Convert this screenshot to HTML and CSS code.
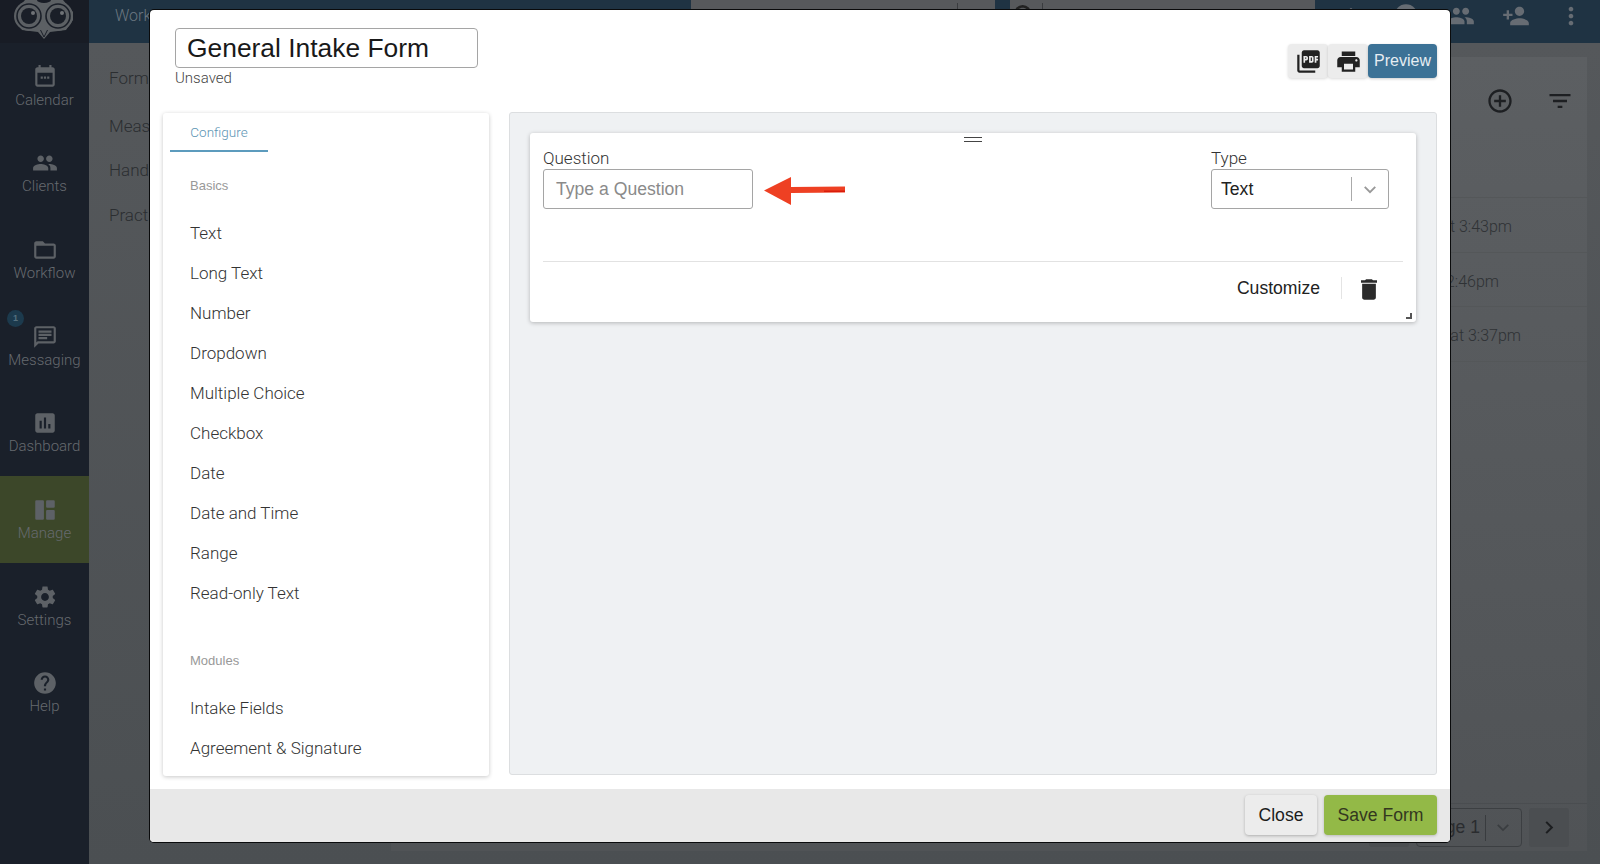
FILE: index.html
```html
<!DOCTYPE html>
<html lang="en">
<head>
<meta charset="utf-8">
<title>General Intake Form</title>
<link rel="stylesheet" href="styles.css">
</head>
<body>
<div class="app">
  <aside class="sidebar">
    <div class="logo">
      <svg width="89" height="43" viewBox="0 0 89 43">
        <path d="M25 0H63L73 12V20L66 30L50 32L44 39L38 32L22 30L15 20V12Z" fill="#5c6064"/>
        <circle cx="29" cy="16" r="15" fill="#5c6064"/>
        <circle cx="58" cy="16" r="15" fill="#5c6064"/>
        <circle cx="29" cy="16" r="12" fill="none" stroke="#1a1f28" stroke-width="1.600"/>
        <circle cx="58" cy="16" r="12" fill="none" stroke="#1a1f28" stroke-width="1.600"/>
        <circle cx="29" cy="16" r="8" fill="#1a1f28"/>
        <circle cx="58" cy="16" r="8" fill="#1a1f28"/>
        <circle cx="33" cy="13" r="2" fill="#6f7377"/>
        <circle cx="62" cy="13" r="2" fill="#6f7377"/>
        <ellipse cx="44" cy="0" rx="7" ry="3" fill="#181c25"/>
        <path d="M40.500 30L44 37L47.500 30" fill="none" stroke="#1a1f28" stroke-width="1"/>
      </svg>
    </div>
    <nav class="nav">
      <a class="nav-item">
        <svg class="nav-icon" viewBox="0 0 24 24"><path d="M19 3h-1V1h-2v2H8V1H6v2H5c-1.100 0-2 .9-2 2v14c0 1.100.9 2 2 2h14c1.100 0 2-.9 2-2V5c0-1.100-.9-2-2-2zm0 16H5V8h14v11zM8 11.500h2v2H8zm3 0h2v2h-2zm3 0h2v2h-2z"/></svg>
        <span>Calendar</span>
      </a>
      <a class="nav-item">
        <svg class="nav-icon" viewBox="0 0 24 24"><path d="M16 11c1.660 0 2.990-1.340 2.990-3S17.660 5 16 5c-1.660 0-3 1.340-3 3s1.340 3 3 3zm-8 0c1.660 0 2.990-1.340 2.990-3S9.660 5 8 5C6.340 5 5 6.340 5 8s1.340 3 3 3zm0 2c-2.330 0-7 1.170-7 3.500V19h14v-2.500c0-2.330-4.670-3.500-7-3.500zm8 0c-.29 0-.62.02-.97.05 1.160.84 1.970 1.970 1.970 3.450V19h6v-2.500c0-2.330-4.670-3.500-7-3.500z"/></svg>
        <span>Clients</span>
      </a>
      <a class="nav-item">
        <svg class="nav-icon" viewBox="0 0 24 24"><path d="M20 6h-8l-2-2H4c-1.100 0-1.990.9-1.990 2L2 18c0 1.100.9 2 2 2h16c1.100 0 2-.9 2-2V8c0-1.100-.9-2-2-2zm0 12H4V8h16v10z"/></svg>
        <span>Workflow</span>
      </a>
      <a class="nav-item">
        <span class="badge">1</span>
        <svg class="nav-icon" viewBox="0 0 24 24"><path d="M20 2H4c-1.100 0-1.990.9-1.990 2L2 22l4-4h14c1.100 0 2-.9 2-2V4c0-1.100-.9-2-2-2zm0 14H5.170L4 17.170V4h16v12zM6 12h8v2H6zm0-3h12v2H6zm0-3h12v2H6z"/></svg>
        <span>Messaging</span>
      </a>
      <a class="nav-item">
        <svg class="nav-icon" viewBox="0 0 24 24"><path d="M19 3H5c-1.100 0-2 .9-2 2v14c0 1.100.9 2 2 2h14c1.100 0 2-.9 2-2V5c0-1.100-.9-2-2-2zM9 17H7v-7h2v7zm4 0h-2V7h2v10zm4 0h-2v-4h2v4z"/></svg>
        <span>Dashboard</span>
      </a>
      <a class="nav-item nav-active">
        <svg class="nav-icon" viewBox="0 0 24 24"><path d="M4 3h6a1 1 0 0 1 1 1v16a1 1 0 0 1-1 1H4a1 1 0 0 1-1-1V4a1 1 0 0 1 1-1zm10 0h6a1 1 0 0 1 1 1v5a1 1 0 0 1-1 1h-6a1 1 0 0 1-1-1V4a1 1 0 0 1 1-1zm0 9h6a1 1 0 0 1 1 1v7a1 1 0 0 1-1 1h-6a1 1 0 0 1-1-1v-7a1 1 0 0 1 1-1z"/></svg>
        <span>Manage</span>
      </a>
      <a class="nav-item">
        <svg class="nav-icon" viewBox="0 0 24 24"><path d="M19.140 12.940c.04-.3.06-.61.06-.94 0-.32-.02-.64-.07-.94l2.030-1.580c.18-.14.23-.41.12-.61l-1.920-3.320c-.12-.22-.37-.29-.59-.22l-2.390.96c-.5-.38-1.030-.7-1.620-.94l-.36-2.540c-.04-.24-.24-.41-.48-.41h-3.840c-.24 0-.43.17-.47.41l-.36 2.540c-.59.24-1.130.57-1.620.94l-2.390-.96c-.22-.08-.47 0-.59.22L2.740 8.870c-.12.21-.08.47.12.61l2.030 1.580c-.05.3-.09.63-.09.94s.02.64.07.94l-2.030 1.580c-.18.14-.23.41-.12.61l1.920 3.320c.12.22.37.29.59.22l2.390-.96c.5.38 1.030.7 1.620.94l.36 2.540c.05.24.24.41.48.41h3.840c.24 0 .44-.17.47-.41l.36-2.540c.59-.24 1.130-.56 1.620-.94l2.390.96c.22.08.47 0 .59-.22l1.920-3.320c.12-.22.07-.47-.12-.61l-2.010-1.580zM12 15.600c-1.980 0-3.600-1.620-3.600-3.600s1.620-3.600 3.600-3.600 3.600 1.620 3.600 3.600-1.620 3.600-3.600 3.600z"/></svg>
        <span>Settings</span>
      </a>
      <a class="nav-item">
        <svg class="nav-icon" viewBox="0 0 24 24"><path d="M12 2C6.480 2 2 6.480 2 12s4.480 10 10 10 10-4.480 10-10S17.520 2 12 2zm1 17h-2v-2h2v2zm2.070-7.750l-.9.92C13.450 12.900 13 13.500 13 15h-2v-.5c0-1.100.45-2.100 1.170-2.830l1.240-1.260c.37-.36.59-.86.59-1.410 0-1.100-.9-2-2-2s-2 .9-2 2H8c0-2.210 1.790-4 4-4s4 1.790 4 4c0 .88-.36 1.680-.93 2.250z"/></svg>
        <span>Help</span>
      </a>
    </nav>
  </aside>
  <div class="main">
    <header class="topbar">
      <span class="top-title">Workspace</span>
      <div class="top-tab"><span class="top-tab-text">Work Wellness Team</span><span class="top-tab-sep"></span></div>
      <div class="top-search">
        <svg class="search-icon" viewBox="0 0 24 24"><path d="M15.500 14h-.79l-.28-.27A6.470 6.470 0 0 0 16 9.500 6.500 6.500 0 1 0 9.500 16c1.610 0 3.090-.59 4.230-1.570l.27.28v.79l5 4.990L20.490 19l-4.990-5zm-6 0C7.010 14 5 11.990 5 9.500S7.010 5 9.500 5 14 7.010 14 9.500 11.990 14 9.500 14z"/></svg>
        <span class="search-text">Search</span>
      </div>
      <div class="top-icons">
        <svg class="top-icon" viewBox="0 0 24 24"><path d="M12 5l-9 8h3v7h12v-7h3z"/></svg>
        <svg class="top-icon" viewBox="0 0 24 24"><circle cx="12" cy="12" r="10"/></svg>
        <svg class="top-icon" viewBox="0 0 24 24"><path d="M16 11c1.660 0 2.990-1.340 2.990-3S17.660 5 16 5c-1.660 0-3 1.340-3 3s1.340 3 3 3zm-8 0c1.660 0 2.990-1.340 2.990-3S9.660 5 8 5C6.340 5 5 6.340 5 8s1.340 3 3 3zm0 2c-2.330 0-7 1.170-7 3.500V19h14v-2.500c0-2.330-4.670-3.500-7-3.500zm8 0c-.29 0-.62.02-.97.05 1.160.84 1.970 1.970 1.970 3.450V19h6v-2.500c0-2.330-4.670-3.500-7-3.500z"/></svg>
        <svg class="top-icon" viewBox="0 0 24 24"><path d="M15 12c2.210 0 4-1.790 4-4s-1.790-4-4-4-4 1.790-4 4 1.790 4 4 4zm-9-2V7H4v3H1v2h3v3h2v-3h3v-2H6zm9 4c-2.670 0-8 1.340-8 4v2h16v-2c0-2.660-5.330-4-8-4z"/></svg>
        <svg class="top-icon" viewBox="0 0 24 24"><path d="M12 8c1.100 0 2-.9 2-2s-.9-2-2-2-2 .9-2 2 .9 2 2 2zm0 2c-1.100 0-2 .9-2 2s.9 2 2 2 2-.9 2-2-.9-2-2-2zm0 6c-1.100 0-2 .9-2 2s.9 2 2 2 2-.9 2-2-.9-2-2-2z"/></svg>
      </div>
    </header>
    <div class="content">
      <nav class="subnav">
        <a>Forms</a>
        <a>Measures</a>
        <a>Handouts</a>
        <a>Practice</a>
      </nav>
      <section class="list-card">
        <div class="list-tools">
          <svg class="tool-icon" viewBox="0 0 24 24"><path d="M13 7h-2v4H7v2h4v4h2v-4h4v-2h-4V7zm-1-5C6.480 2 2 6.480 2 12s4.480 10 10 10 10-4.480 10-10S17.520 2 12 2zm0 18c-4.410 0-8-3.590-8-8s3.590-8 8-8 8 3.590 8 8-3.590 8-8 8z"/></svg>
          <svg class="tool-icon" viewBox="0 0 24 24"><path d="M10 18h4v-2h-4v2zM3 6v2h18V6H3zm3 7h12v-2H6v2z"/></svg>
        </div>
        <div class="list-row row-a">Saved on June 4 at 3:43pm</div>
        <div class="list-row row-b">Saved on June 4, 2:46pm</div>
        <div class="list-row row-c">Saved on June 4 at 3:37pm</div>
        <div class="pager">
          <div class="pager-btn"></div>
          <div class="pager-select">
            <span>Page 1</span>
            <span class="pager-sep"></span>
            <svg class="pager-chev" viewBox="0 0 16 10"><path d="M2 2l6 6 6-6" fill="none" stroke="#3a3d40" stroke-width="2"/></svg>
          </div>
          <div class="pager-btn">
            <svg class="pager-next" viewBox="0 0 10 16"><path d="M2 2l6 6-6 6" fill="none" stroke="#1c1e20" stroke-width="2.200"/></svg>
          </div>
        </div>
      </section>
    </div>
  </div>
</div>

<div class="modal">
  <header class="modal-head">
    <div class="title-block">
      <div class="title-input">General Intake Form</div>
      <div class="status">Unsaved</div>
    </div>
    <div class="head-actions">
      <button class="icon-btn">
        <svg class="btn-icon" viewBox="0 0 24 24"><path d="M20 2H8c-1.100 0-2 .9-2 2v12c0 1.100.9 2 2 2h12c1.100 0 2-.9 2-2V4c0-1.100-.9-2-2-2zm-8.500 7.500c0 .83-.67 1.500-1.500 1.500H9v2H7.500V7H10c.83 0 1.500.67 1.500 1.500v1zm5 2c0 .83-.67 1.500-1.500 1.500h-2.500V7H15c.83 0 1.500.67 1.500 1.500v3zm4-3H19v1h1.500V11H19v2h-1.500V7h3v1.500zM9 9.500h1v-1H9v1zM4 6H2v14c0 1.100.9 2 2 2h14v-2H4V6zm10 5.500h1v-3h-1v3z"/></svg>
      </button>
      <button class="icon-btn">
        <svg class="btn-icon" viewBox="0 0 24 24"><path d="M19 8H5c-1.660 0-3 1.340-3 3v6h4v4h12v-4h4v-6c0-1.660-1.340-3-3-3zm-3 11H8v-5h8v5zm3-7c-.55 0-1-.45-1-1s.45-1 1-1 1 .45 1 1-.45 1-1 1zm-1-9H6v4h12V3z"/></svg>
      </button>
      <button class="preview-btn">Preview</button>
    </div>
  </header>
  <div class="modal-body">
    <aside class="palette">
      <div class="tabs"><span class="tab">Configure</span></div>
      <div class="group-title">Basics</div>
      <ul class="fields">
        <li>Text</li>
        <li>Long Text</li>
        <li>Number</li>
        <li>Dropdown</li>
        <li>Multiple Choice</li>
        <li>Checkbox</li>
        <li>Date</li>
        <li>Date and Time</li>
        <li>Range</li>
        <li>Read-only Text</li>
      </ul>
      <div class="group-title group-modules">Modules</div>
      <ul class="fields">
        <li>Intake Fields</li>
        <li>Agreement &amp; Signature</li>
      </ul>
    </aside>
    <main class="canvas">
      <article class="q-card">
        <div class="drag-handle"></div>
        <div class="q-row">
          <div class="q-left">
            <div class="q-field">
              <label class="q-label">Question</label>
              <div class="q-input">Type a Question</div>
            </div>
            <svg class="arrow" width="82" height="30" viewBox="0 0 82 30">
              <path d="M0 14.500L27 1v10L81 10.500v6L27 17v12z" fill="#ee4023"/>
              <path d="M60 14.500h21v1.500H60z" fill="#d91c0b"/>
            </svg>
          </div>
          <div class="q-field q-type">
            <label class="q-label">Type</label>
            <div class="q-select">
              <span class="q-select-value">Text</span>
              <span class="q-select-sep"></span>
              <svg class="q-select-chev" viewBox="0 0 16 10"><path d="M2 2l6 6 6-6" fill="none" stroke="#999" stroke-width="2.200"/></svg>
            </div>
          </div>
        </div>
        <div class="q-foot">
          <span class="customize">Customize</span>
          <span class="foot-sep"></span>
          <svg class="trash" viewBox="0 0 14 18"><path d="M1 16c0 1.100.9 2 2 2h8c1.100 0 2-.9 2-2V4H1v12zM14 1h-3.500l-1-1h-5l-1 1H0v2h14V1z"/></svg>
        </div>
        <div class="resize-corner"></div>
      </article>
    </main>
  </div>
  <footer class="modal-foot">
    <button class="close-btn">Close</button>
    <button class="save-btn">Save Form</button>
  </footer>
</div>
</body>
</html>
```
FILE: styles.css
```css
* { box-sizing: border-box; }
html, body { margin: 0; height: 100%; overflow: hidden; }
body { font-family: "Liberation Sans", Arial, sans-serif; background: #4f5356; }

.app { display: flex; width: 1600px; height: 864px; }

/* dimmed application behind the dialog */
.sidebar { width: 89px; flex: none; background: #1a202a; display: flex; flex-direction: column; }
.logo { height: 43px; background: #181c25; overflow: hidden; }
.logo svg { display: block; }
.nav { display: flex; flex-direction: column; }
.nav-item { position: relative; height: 86.700px; display: flex; flex-direction: column; align-items: center; padding-top: 20.500px; gap: 1px; font: 300 15px Roboto, sans-serif; color: #666a6f; }
.nav-active { background: #3c4729; }
.nav-icon { width: 26px; height: 26px; fill: #5d6166; flex: none; }
.badge { position: absolute; left: 7px; top: 7px; width: 17px; height: 17px; border-radius: 50%; background: #1c3a4d; color: #55707f; font: 700 9px/17px "Liberation Sans", sans-serif; text-align: center; }

.main { flex: 1; display: flex; flex-direction: column; min-width: 0; }
.topbar { height: 43px; flex: none; background: #1f3343; display: flex; position: relative; }
.top-title { font: 300 16px/32px Roboto, sans-serif; color: #6a7680; padding-left: 26px; width: 602px; }
.top-tab { width: 304px; height: 43px; background: #57595c; display: flex; font-size: 15px; font-weight: 700; color: #222; padding: 6px 0 0 10px; }
.top-tab-text { flex: 1; }
.top-tab-sep { width: 1px; height: 30px; margin: -3px 37px 0 0; background: #3a3c3f; }
.top-search { margin-left: 15px; width: 305px; height: 43px; background: #57595c; display: flex; align-items: flex-start; font-size: 15px; color: #222; }
.search-icon { width: 32px; height: 32px; fill: #222; margin-top: 1px; flex: none; }
.search-text { border-left: 1px solid #3a3c3f; height: 30px; padding: 6px 0 0 8px; margin-top: 3px; }
.top-icons { flex: 1; display: flex; align-items: flex-start; padding-left: 22px; gap: 27px; }
.top-icon { width: 28px; height: 28px; fill: #666c73; flex: none; margin-top: 2px; }

.content { flex: 1; display: flex; min-height: 0; background: linear-gradient(#55585b, #4b4f52); padding-right: 13px; }
.subnav { width: 302px; flex: none; display: flex; flex-direction: column; padding: 24px 0 0 20px; font: 300 17px Roboto, sans-serif; color: #2b2e31; }
.subnav a { height: 44.500px; line-height: 22px; white-space: nowrap; }
.subnav a:first-child { height: 47.500px; }
.list-card { flex: 1; margin-top: 14px; margin-bottom: 13px; background: linear-gradient(#5c5f62, #505356); display: flex; flex-direction: column; min-width: 0; }
.list-tools { height: 141px; flex: none; display: flex; justify-content: flex-end; align-items: flex-start; gap: 32px; padding: 30px 13px 0 0; border-bottom: 1px solid #545759; }
.tool-icon { width: 28px; height: 28px; fill: #1d1f22; }
.list-row { height: 54.500px; flex: none; display: flex; justify-content: flex-end; align-items: center; padding-top: 4px; border-bottom: 1px solid #545759; font: 300 16px Roboto, sans-serif; color: #2f3235; white-space: nowrap; overflow: hidden; }
.row-a { padding-right: 75px; }
.row-b { padding-right: 88px; }
.row-c { padding-right: 66px; }
.pager { margin-top: auto; height: 48px; flex: none; display: flex; justify-content: flex-end; gap: 7px; padding: 4px 18px 0 0; border-top: 1px solid #4a4d50; }
.pager-btn { width: 40px; height: 39px; background: #4b4e51; border-radius: 3px; display: flex; align-items: center; justify-content: center; }
.pager-select { width: 106px; height: 39px; border: 1px solid #3c3f42; border-radius: 4px; display: flex; align-items: center; justify-content: flex-end; padding-right: 11px; font-size: 17.600px; color: #2a2c2f; }
.pager-sep { width: 1px; height: 26px; margin: 0 10px 0 5px; background: #393c3f; }
.pager-chev { width: 14px; height: 9px; }
.pager-next { width: 10px; height: 15px; }

/* dialog */
.modal { position: absolute; left: 150px; top: 10px; width: 1300px; height: 832px; background: #fff; border-radius: 4px; box-shadow: 0 0 0 1px #0a0b0c; display: flex; flex-direction: column; overflow: hidden; }
.modal-head { height: 102px; flex: none; display: flex; justify-content: space-between; padding: 18px 13px 0 25px; }
.title-input { width: 303px; height: 40px; border: 1px solid #a5a5a5; border-radius: 4px; padding: 0 11px; font-size: 26.400px; line-height: 38px; color: #191919; white-space: nowrap; }
.status { font: 300 15px/20px Roboto, sans-serif; color: #444; }
.head-actions { display: flex; align-items: flex-start; margin-top: 16px; }
.icon-btn { width: 40px; height: 34px; padding: 0; border: 0; background: #ececec; border-radius: 4px; box-shadow: 0 1px 3px rgba(0,0,0,.15); display: flex; align-items: center; justify-content: center; }
.btn-icon { width: 27px; height: 27px; fill: #222; }
.preview-btn { width: 69px; height: 34px; padding: 0; border: 0; background: #3c7296; border-radius: 4px; color: #e6edf2; font: 16px "Liberation Sans", sans-serif; box-shadow: 0 1px 3px rgba(0,0,0,.2); }

.modal-body { flex: 1; display: flex; gap: 20px; padding: 0 13px; min-height: 0; }
.palette { width: 326px; height: 663px; margin-top: 1px; flex: none; background: #fff; border-radius: 3px; box-shadow: 0 1px 4px rgba(0,0,0,.22); padding: 0 7px; }
.tabs { height: 39px; }
.tab { display: inline-block; width: 98px; height: 39px; border-bottom: 2px solid #5c9bbd; text-align: center; font: 300 13.500px/39px Roboto, sans-serif; color: #5c94b4; }
.group-title { font: 13px/16px "Liberation Sans", sans-serif; color: #999; padding: 26px 0 0 20px; }
.group-modules { padding-top: 40px; }
.fields { list-style: none; margin: 0; padding: 19px 0 0 20px; }
.fields li { height: 40px; font: 300 17px/40px Roboto, sans-serif; color: #333; white-space: nowrap; }

.canvas { width: 928px; height: 663px; flex: none; background: #eff1f3; border: 1px solid #dcdee0; border-radius: 3px; padding: 20px; }
.q-card { position: relative; height: 189px; background: #fff; border-radius: 3px; box-shadow: 0 1px 4px rgba(0,0,0,.25); padding: 15px 13px 0; }
.drag-handle { position: absolute; left: 434px; top: 4px; width: 18px; height: 5px; border-top: 1.500px solid #444; border-bottom: 1.500px solid #444; }
.q-row { display: flex; justify-content: space-between; padding-right: 14px; height: 114px; border-bottom: 1px solid #e2e2e2; }
.q-left { display: flex; align-items: flex-start; gap: 11px; }
.q-label { display: block; font: 300 17px/21px Roboto, sans-serif; color: #333; }
.q-input { width: 210px; height: 40px; border: 1px solid #a5a5a5; border-radius: 3px; padding-left: 12px; font-size: 17.600px; line-height: 38px; color: #8a8a8a; }
.arrow { margin-top: 28px; flex: none; }
.q-select { width: 178px; height: 40px; border: 1px solid #a5a5a5; border-radius: 3px; display: flex; align-items: center; padding-left: 9px; }
.q-select-value { flex: 1; font-size: 17.600px; color: #222; }
.q-select-sep { width: 1px; height: 24px; background: #aaa; }
.q-select-chev { width: 14px; height: 9px; margin: 0 11px; }
.q-foot { display: flex; justify-content: flex-end; align-items: center; height: 52px; padding-right: 26px; }
.customize { font-size: 17.600px; color: #222; }
.foot-sep { width: 1px; height: 22px; background: #e4e4e4; margin: 0 19px 0 21px; }
.trash { width: 16px; height: 21px; margin-top: 2px; fill: #2b2b2b; }
.resize-corner { position: absolute; right: 4px; bottom: 3px; width: 6px; height: 6px; border-right: 2px solid #555; border-bottom: 2px solid #555; }

.modal-foot { height: 53px; flex: none; background: #e8e8e8; display: flex; justify-content: flex-end; gap: 7px; padding: 6px 13px 0 0; align-items: flex-start; }
.close-btn { width: 72px; height: 40px; padding: 0; border: 0; background: #ececec; border-radius: 4px; font: 17.600px "Liberation Sans", sans-serif; color: #1c1c1c; box-shadow: 0 1px 3px rgba(0,0,0,.25); }
.save-btn { width: 113px; height: 40px; padding: 0; border: 0; background: #93b947; border-radius: 4px; font: 17.600px "Liberation Sans", sans-serif; color: #33371f; box-shadow: 0 1px 3px rgba(0,0,0,.2); }
```
